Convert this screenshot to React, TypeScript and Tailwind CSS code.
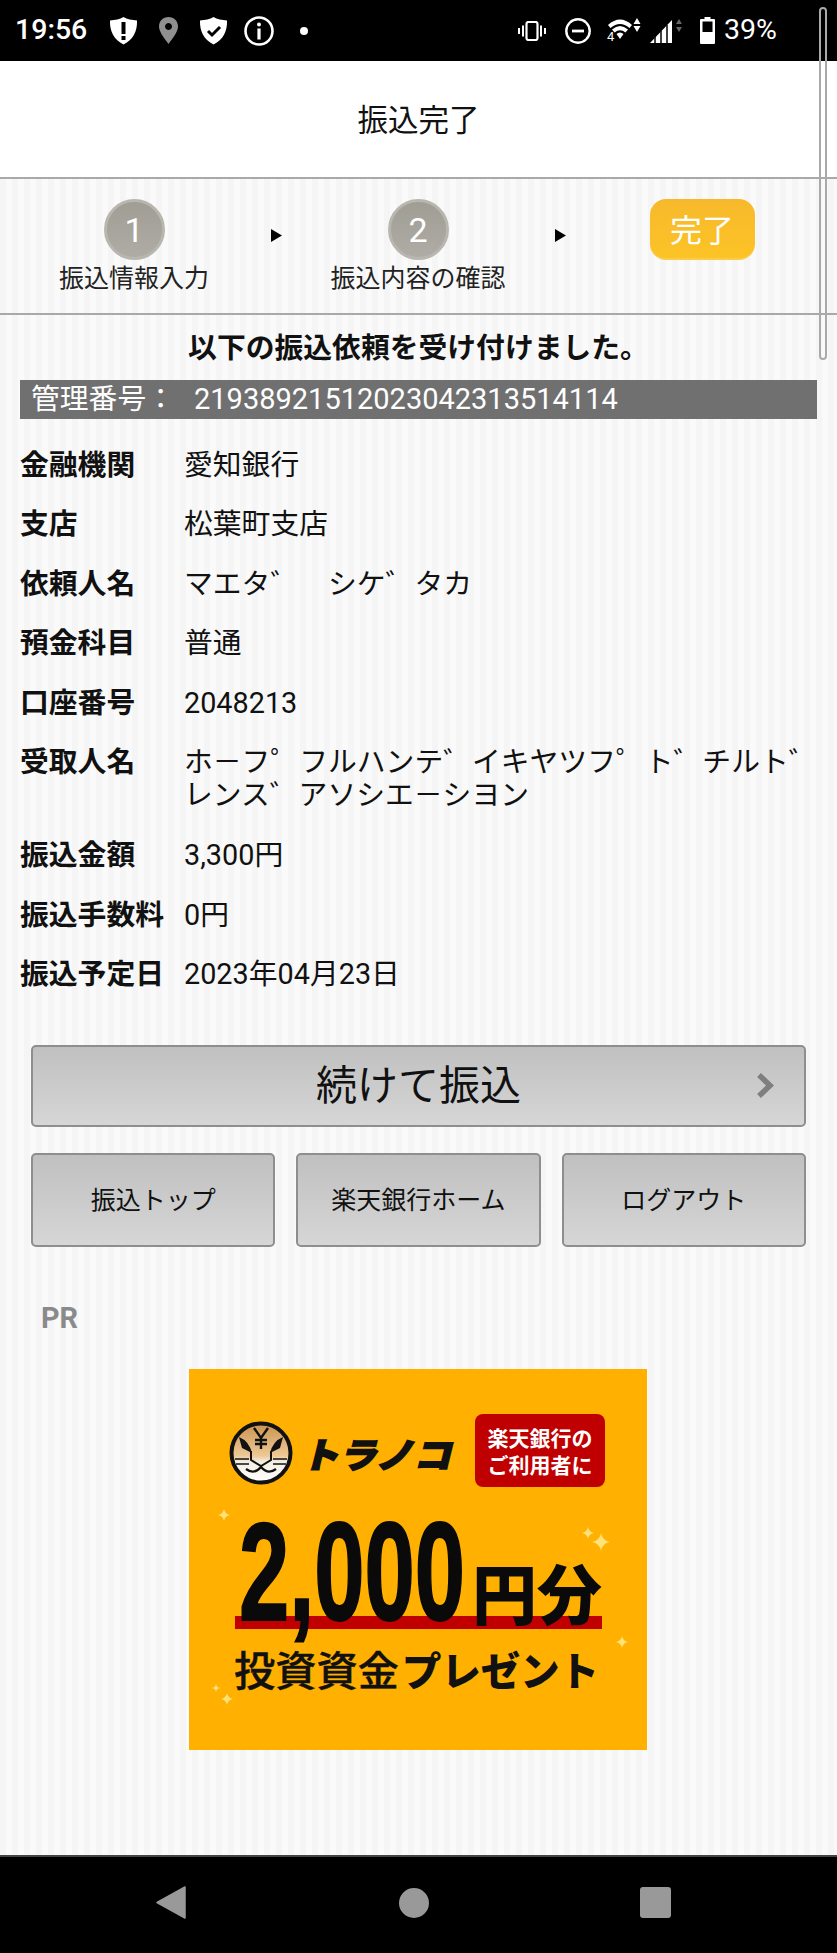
import React from "react";

const Shield = ({ children }: { children: React.ReactNode }) => (
  <svg viewBox="0 0 29 29" className="w-[29px] h-[29px] shrink-0">
    <path d="M14.5 1C18 3.5 23 4 28 4.5C28.5 15 24 24 14.5 28.5C5 24 .5 15 1 4.5C6 4 11 3.5 14.5 1Z" fill="#fff" />
    {children}
  </svg>
);

const Sparkle = ({ x, y, r }: { x: number; y: number; r: number }) => (
  <path
    d={`M${x} ${y - r}Q${x + r * 0.15} ${y - r * 0.15} ${x + r} ${y}Q${x + r * 0.15} ${y + r * 0.15} ${x} ${y + r}Q${x - r * 0.15} ${y + r * 0.15} ${x - r} ${y}Q${x - r * 0.15} ${y - r * 0.15} ${x} ${y - r}Z`}
    fill="#ffe27a"
  />
);

const StatusBar = () => (
  <div className="h-[61px] bg-black text-white flex items-center pl-[15px] pr-[60px] shrink-0">
    <span className="text-[28.5px] font-medium leading-none w-[70px] whitespace-nowrap">19:56</span>
    <div className="ml-[24px] flex">
      <Shield>
        <rect x="12.5" y="6" width="4" height="12" fill="#000" />
        <rect x="12.5" y="20" width="4" height="4" fill="#000" />
      </Shield>
    </div>
    <svg viewBox="0 0 19 27" className="ml-[21px] w-[19px] h-[27px]">
      <path fillRule="evenodd" d="M9.5 0C15 0 19 4 19 9.5C19 15 13 22 9.5 27C6 22 0 15 0 9.5C0 4 4 0 9.5 0ZM9.5 6a3.5 3.5 0 1 0 .01 0Z" fill="#8f8f8f" />
    </svg>
    <div className="ml-[21px] flex">
      <Shield>
        <path d="M9 15L13 19L21 11" fill="none" stroke="#000" strokeWidth="3" />
      </Shield>
    </div>
    <svg viewBox="0 0 30 30" className="ml-[16px] w-[30px] h-[30px]">
      <circle cx="15" cy="15" r="13.5" fill="none" stroke="#fff" strokeWidth="2.6" />
      <rect x="13.4" y="12.5" width="3.2" height="11" fill="#fff" />
      <circle cx="15" cy="8.5" r="2" fill="#fff" />
    </svg>
    <div className="ml-[26px] w-[8px] h-[8px] rounded-full bg-white" />

    <svg viewBox="0 0 28 20" className="ml-auto w-[28px] h-[20px]">
      <rect x="8.5" y="1" width="11" height="18" rx="2" fill="none" stroke="#fff" strokeWidth="2.2" />
      <rect x="4" y="4.5" width="2" height="11" fill="#fff" />
      <rect x="22" y="4.5" width="2" height="11" fill="#fff" />
      <rect x="0" y="7" width="2" height="6" fill="#fff" />
      <rect x="26" y="7" width="2" height="6" fill="#fff" />
    </svg>
    <svg viewBox="0 0 26 26" className="ml-[19px] w-[26px] h-[26px]">
      <circle cx="13" cy="13" r="11.7" fill="none" stroke="#fff" strokeWidth="2.4" />
      <rect x="7" y="11.6" width="12" height="2.8" fill="#fff" />
    </svg>
    <svg viewBox="0 0 36 28" className="ml-[16px] w-[36px] h-[28px]">
      <path d="M1 8Q13 -3 25 8L22.5 11Q13 3 3.5 11Z" fill="#fff" />
      <path d="M5 12.5Q13 5.5 21 12.5L18.5 15.500Q13 11 7.5 15.500Z" fill="#fff" />
      <path d="M9.500 17Q13 14 16.500 17L13 22Z" fill="#fff" />
      <path d="M30 1L33.500 7H26.500Z" fill="#fff" />
      <path d="M30 15L33.500 9H26.500Z" fill="#fff" />
      <text x="0" y="24" fontSize="13" fill="#fff" fontFamily="Roboto, sans-serif">4</text>
    </svg>
    <svg viewBox="0 0 33 26" className="ml-[7px] w-[33px] h-[26px]">
      <path d="M0 25L22 2V25Z" fill="#fff" />
      <path d="M5 25V19M11 25V13M17 25V7" stroke="#000" strokeWidth="1.5" />
      <path d="M29 1L32 6H26Z" fill="#666" />
      <path d="M29 14L32 9H26Z" fill="#666" />
    </svg>
    <svg viewBox="0 0 15 27" className="ml-[17px] w-[15px] h-[27px]">
      <path fillRule="evenodd" d="M4.500 0H10.500V2H14a1 1 0 0 1 1 1V26a1 1 0 0 1-1 1H1a1 1 0 0 1-1-1V3a1 1 0 0 1 1-1H4.500ZM2.500 4.500V15H12.500V4.500Z" fill="#fff" />
    </svg>
    <span className="ml-[9px] text-[28.5px] leading-none whitespace-nowrap">39%</span>
  </div>
);

const StepCircle = ({ n, label }: { n: string; label: string }) => (
  <div className="w-[180px] flex flex-col items-center">
    <div className="w-[61px] h-[61px] rounded-full bg-gradient-to-b from-[#9f9d94] to-[#aeaca4] border-[3px] border-[#b8b6ae] flex items-center justify-center text-white text-[34px] leading-none">
      {n}
    </div>
    <div className="mt-[2px] text-[25px] leading-[33px] text-[#222] whitespace-nowrap">{label}</div>
  </div>
);

const Arrow = () => (
  <div className="w-[104px] h-[61px] flex items-center justify-center pt-[12px]">
    <svg viewBox="0 0 11 13" className="w-[11px] h-[13px]">
      <path d="M0 0L11 6.500L0 13Z" fill="#000" />
    </svg>
  </div>
);

const rows: [string, string[]][] = [
  ["金融機関", ["愛知銀行"]],
  ["支店", ["松葉町支店"]],
  ["依頼人名", ["マエタ゛　シケ゛タカ"]],
  ["預金科目", ["普通"]],
  ["口座番号", ["2048213"]],
  ["受取人名", ["ホ－フ゜フルハンテ゛イキヤツフ゜ト゛チルト゛", "レンス゛アソシエ－シヨン"]],
  ["振込金額", ["3,300円"]],
  ["振込手数料", ["0円"]],
  ["振込予定日", ["2023年04月23日"]],
];

const SmallButton = ({ children }: { children: React.ReactNode }) => (
  <button className="flex-1 h-[94px] rounded-[5px] border-2 border-[#8e8e8e] bg-gradient-to-b from-[#c0c0c0] to-[#d6d6d6] text-[25px] text-[#111] flex items-center justify-center whitespace-nowrap">
    {children}
  </button>
);

const Banner = () => (
  <svg viewBox="0 0 458 381" className="w-[458px] h-[381px] block" fontFamily="'Noto Sans CJK JP', sans-serif">
    <rect width="458" height="381" fill="#ffb000" />
    <defs>
      <linearGradient id="tiger" x1="0" y1="0" x2="0" y2="1">
        <stop offset="0" stopColor="#c9924e" />
        <stop offset="0.55" stopColor="#eec996" />
        <stop offset="0.65" stopColor="#f4efe3" />
        <stop offset="1" stopColor="#fff" />
      </linearGradient>
    </defs>
    <circle cx="72" cy="84" r="29.500" fill="url(#tiger)" stroke="#111" strokeWidth="4" />
    <path d="M65 59L72 69L79 59M72 69V80M66 71H78M66 75H78" fill="none" stroke="#111" strokeWidth="2.400" />
    <path d="M50 68Q60 72 63 84L53 79ZM94 68Q84 72 81 84L91 79Z" fill="#111" />
    <path d="M62 82V91L72 97L82 91V82" fill="none" stroke="#111" strokeWidth="2" />
    <path d="M46 90H60M84 90H98M47 95H60M84 95H97" stroke="#111" strokeWidth="1.500" />
    <path d="M57 100Q65 106 72 98Q79 106 87 100" fill="none" stroke="#111" strokeWidth="2.200" />

    <g transform="translate(112 99) skewX(-14)">
      <text x="0" y="0" fontSize="35" fontWeight="900" fill="#111" stroke="#111" strokeWidth="1.600" textLength="150" lengthAdjust="spacingAndGlyphs">
        トラノコ
      </text>
    </g>

    <rect x="286" y="45" width="130" height="73" rx="8" fill="#c00000" />
    <text x="351" y="77" textAnchor="middle" fontSize="21" fontWeight="700" fill="#fff">楽天銀行の</text>
    <text x="351" y="104" textAnchor="middle" fontSize="21" fontWeight="700" fill="#fff">ご利用者に</text>

    <rect x="46" y="247" width="367" height="13" fill="#c00000" />
    <text x="50" y="251" fontFamily="'Liberation Sans', sans-serif" fontSize="140" fontWeight="700" fill="#0a0a0a" stroke="#0a0a0a" strokeWidth="2" textLength="226" lengthAdjust="spacingAndGlyphs">2,000</text>
    <text x="283" y="250" fontSize="65" fontWeight="900" fill="#0a0a0a">円分</text>
    <text x="45" y="317" fontSize="41" fontWeight="500" fill="#111" stroke="#111" strokeWidth="0.400" textLength="165" lengthAdjust="spacingAndGlyphs">投資資金</text>
    <text x="213" y="317" fontSize="40" fontWeight="900" fill="#111" textLength="197" lengthAdjust="spacingAndGlyphs">プレゼント</text>

    <Sparkle x={35} y={146} r={6} />
    <Sparkle x={399} y={164} r={6} />
    <Sparkle x={412} y={173} r={9} />
    <Sparkle x={433} y={273} r={6} />
    <Sparkle x={27} y={319} r={4} />
    <Sparkle x={38} y={330} r={6} />
  </svg>
);

export default function App() {
  return (
    <div className="relative w-[837px] h-[1953px] overflow-hidden flex flex-col font-['Roboto','Noto_Sans_CJK_JP',sans-serif] text-[#111] bg-[#f7f7f7] bg-[repeating-linear-gradient(90deg,#f5f5f5_0px,#f5f5f5_6px,#fafafa_6px,#fafafa_12px)]">
      <StatusBar />
      <header className="h-[118px] shrink-0 bg-white border-b-2 border-[#a9a9a9] flex items-center justify-center pt-[3px] text-[30.5px]">
        振込完了
      </header>

      <section className="h-[136px] shrink-0 border-b-2 border-[#a9a9a9] pt-[20px] pl-[44px] flex items-start">
        <StepCircle n="1" label="振込情報入力" />
        <Arrow />
        <StepCircle n="2" label="振込内容の確認" />
        <Arrow />
        <div className="w-[180px] flex justify-center">
          <div className="w-[105px] h-[61px] rounded-[16px] bg-gradient-to-b from-[#f7b92c] to-[#fcc326] border-b-2 border-[#fbcb4a] pt-[4px] text-white text-[32px] flex items-center justify-center">
            完了
          </div>
        </div>
      </section>

      <h1 className="mt-[14.5px] text-center text-[28.8px] leading-[36px] font-bold whitespace-nowrap">
        以下の振込依頼を受け付けました。
      </h1>

      <div className="mt-[14px] mx-[20px] h-[39px] bg-[#707070] text-white text-[28.8px] leading-[39px] pl-[11px] flex whitespace-nowrap">
        <span className="w-[163px]">管理番号：</span>
        <span className="text-[29px]">21938921512023042313514114</span>
      </div>

      <dl className="mt-[30px] flex flex-col gap-[26.6px] text-[28.8px] leading-[33px]">
        {rows.map(([label, lines]) => (
          <div key={label} className="flex">
            <dt className="w-[184px] pl-[20px] font-bold whitespace-nowrap shrink-0">{label}</dt>
            <dd className="whitespace-nowrap">
              {lines.map((l) => (
                <div key={l}>{l}</div>
              ))}
            </dd>
          </div>
        ))}
      </dl>

      <div className="mt-[54px] mx-[31px] flex flex-col gap-[26px]">
        <button className="relative h-[82px] rounded-[5px] border-2 border-[#8e8e8e] bg-gradient-to-b from-[#c0c0c0] to-[#d6d6d6] text-[41px] text-[#111] flex items-center justify-center">
          続けて振込
          <svg viewBox="0 0 18 25" className="absolute right-[30px] top-[26px] w-[18px] h-[25px]">
            <path d="M3 2L14 12.500L3 23" fill="none" stroke="#7f7f7f" strokeWidth="5.500" />
          </svg>
        </button>
        <div className="flex gap-[21px]">
          <SmallButton>振込トップ</SmallButton>
          <SmallButton>楽天銀行ホーム</SmallButton>
          <SmallButton>ログアウト</SmallButton>
        </div>
      </div>

      <div className="mt-[54.5px] ml-[41px] text-[28.8px] leading-[32px] font-bold text-[#8a8a8a]">PR</div>

      <div className="mt-[35.5px] pl-[189px]">
        <Banner />
      </div>

      <div className="absolute left-0 right-0 bottom-0 h-[98px] bg-black border-t-2 border-[#444]">
        <svg viewBox="0 0 30 33" className="absolute left-[156px] top-[29px] w-[30px] h-[33px]">
          <path d="M29 1V32L1 16.500Z" fill="#999" stroke="#999" strokeWidth="1.500" strokeLinejoin="round" />
        </svg>
        <div className="absolute left-[399px] top-[31px] w-[30px] h-[30px] rounded-full bg-[#999]" />
        <div className="absolute left-[640px] top-[30px] w-[31px] h-[31px] rounded-[3px] bg-[#999]" />
      </div>

      <div className="absolute left-[819px] top-[7px] w-[8px] h-[353px] rounded-full border-2 border-[#a9a9a9]" />
    </div>
  );
}
